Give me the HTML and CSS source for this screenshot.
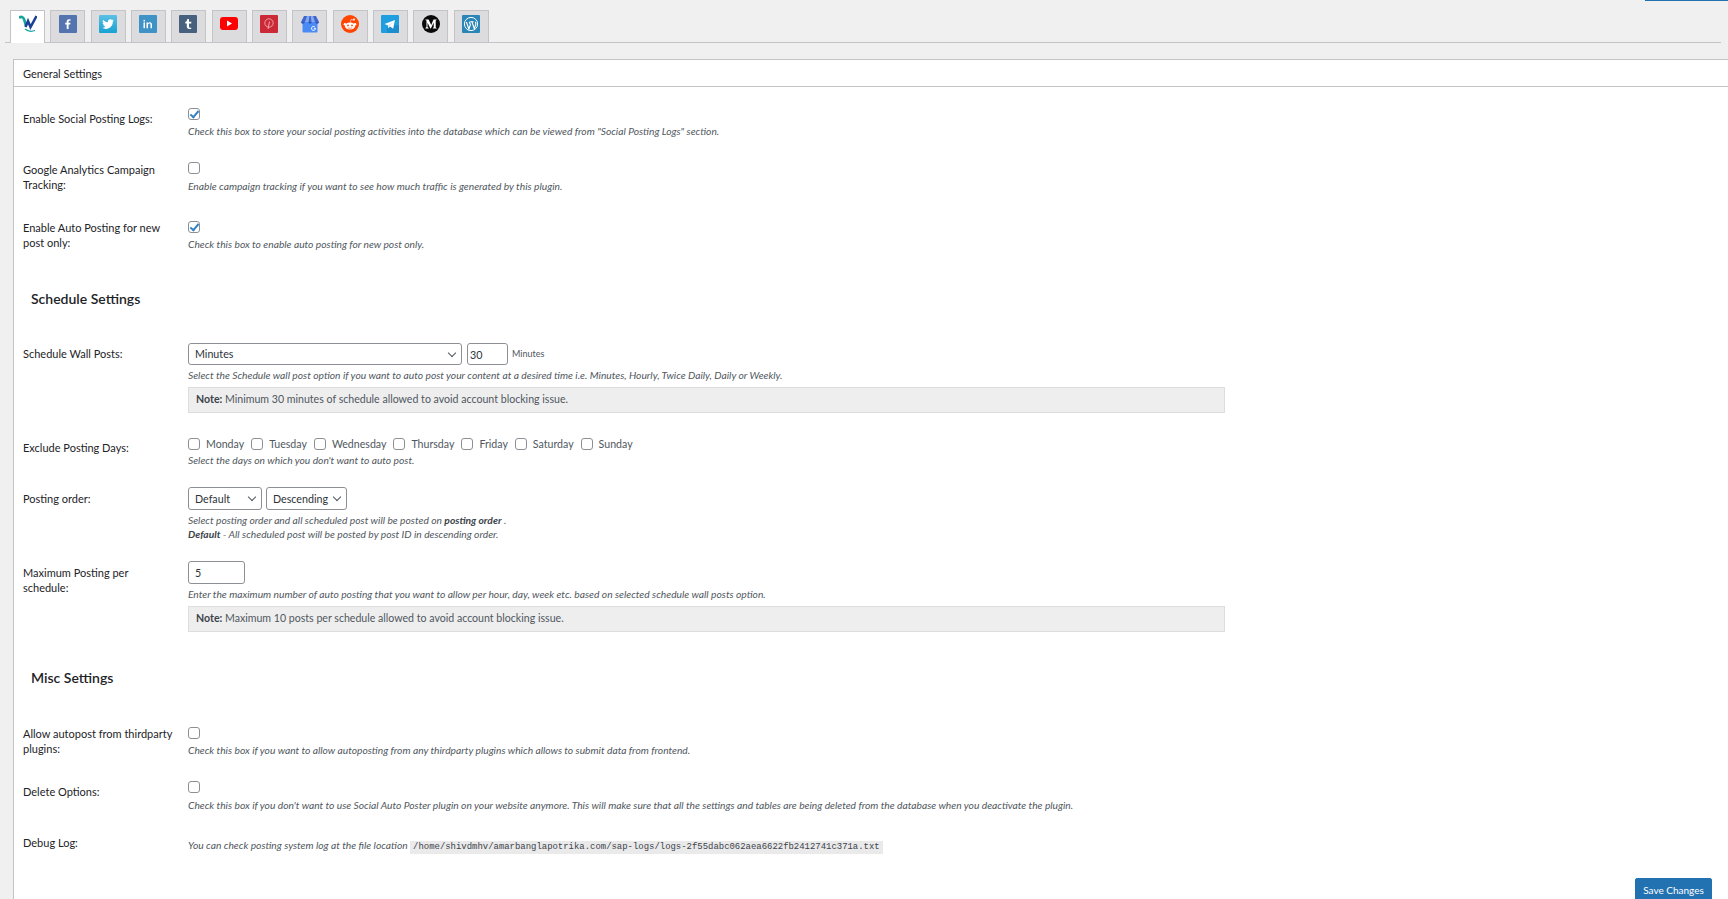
FILE: index.html
```html
<!DOCTYPE html>
<html lang="en">
<head>
    <meta charset="UTF-8">
    <meta name="viewport" content="width=device-width, initial-scale=1.0">
    <title>Social Auto Poster Settings</title>
    <link rel="stylesheet" href="styles.css">
</head>
<body>
    <div class="top-strip"><span class="top-strip-btn"></span></div>

    <nav class="tabs">
        <a class="tab tab-active"><svg width="18" height="18" viewBox="0 0 18 18"><path d="M0 3c2-2 4-1 5 1l2 7" fill="none" stroke="#12a5a0" stroke-width="2.600"/><path d="M6.500 12l2.500-6 2.500 6 6-11" fill="none" stroke="#1b3f96" stroke-width="2.500"/><path d="M6 14c3 2.500 6 3 10 1.500" fill="none" stroke="#12a5a0" stroke-width="1.300"/></svg></a>
        <a class="tab"><svg width="18" height="18" viewBox="0 0 18 18"><rect width="18" height="18" rx="1" fill="#5474b0"/><path d="M9.600 14V9.600h1.600l.3-1.800H9.600V6.700c0-.6.2-.9.9-.9h1V4.300c-.3 0-.8-.1-1.400-.1-1.500 0-2.400.9-2.400 2.300v1.300H6.200v1.800h1.500V14z" fill="#fff"/></svg></a>
        <a class="tab"><svg width="18" height="18" viewBox="0 0 18 18"><defs><linearGradient id="tw" x1="0" y1="0" x2="0" y2="1"><stop offset="0" stop-color="#5cc0e4"/><stop offset="1" stop-color="#17a2d2"/></linearGradient></defs><rect width="18" height="18" rx="1" fill="url(#tw)"/><path d="M15 5.400c-.4.200-.9.300-1.400.4.500-.3.900-.8 1.100-1.300-.5.300-1 .5-1.600.6a2.400 2.400 0 0 0-4.100 2.200C6.900 7.200 5.100 6.300 4 4.800c-.6 1.100-.3 2.500.7 3.200-.4 0-.8-.1-1.100-.3 0 1.200.8 2.200 1.900 2.400-.4.100-.7.100-1.100 0 .3 1 1.200 1.700 2.200 1.700-1 .8-2.300 1.200-3.600 1 4.900 2.800 10.900 0 10.900-6.500.5-.3.800-.7 1.100-.9z" fill="#fff"/></svg></a>
        <a class="tab"><svg width="18" height="18" viewBox="0 0 18 18"><rect width="18" height="18" rx="1" fill="#3f92c6"/><rect x="4.500" y="7.400" width="1.500" height="5.800" fill="#fff"/><rect x="4.500" y="4.900" width="1.500" height="1.500" fill="#fff"/><path d="M7.500 7.400H9v.8c.4-.6 1-.9 1.800-.9 1.400 0 2.200.9 2.200 2.500v3.400h-1.500v-3.200c0-.9-.3-1.400-1-1.400-.8 0-1.500.5-1.500 1.500v3.100H7.500z" fill="#fff"/></svg></a>
        <a class="tab"><svg class="icon-tumblr" width="18" height="18" viewBox="0 0 18 18"><rect width="18" height="18" rx="1" fill="#47617f"/><path d="M10 4v2.700h2.300v1.800H10v3c0 .9.500 1.200 1.200 1.200h1V14H10.300C8.800 14 7.800 13 7.800 11.600V8.500H6.300V7c1.300-.4 1.900-1.400 2-3z" fill="#fff"/></svg></a>
        <a class="tab"><svg class="icon-yt" width="18" height="13" viewBox="0 0 18 13"><rect width="18" height="13" rx="3" fill="#f00"/><path d="M7 3.500v6l5-3z" fill="#fff"/></svg></a>
        <a class="tab"><svg width="18" height="18" viewBox="0 0 18 18"><rect width="18" height="18" rx="1" fill="#cc2936"/><circle cx="9" cy="8" r="4.200" fill="none" stroke="#f3b9bd" stroke-width=".8"/><path d="M9.500 6.500L8 14" fill="none" stroke="#f3b9bd" stroke-width=".9"/></svg></a>
        <a class="tab"><svg width="18" height="18" viewBox="0 0 18 18"><path d="M1.500 7h15v9.500a1 1 0 0 1-1 1h-13a1 1 0 0 1-1-1z" fill="#4a8af4"/><path d="M3 1h12l3 6H0z" fill="#3f66cf"/><path d="M6 1h2.400L7.600 7H4zM9.700 1h2.400L14 7h-3.500z" fill="#86a8ec"/><path d="M0 7h3.600a1.800 1.800 0 0 1-3.600 0zM7.200 7h3.600a1.800 1.800 0 0 1-3.600 0zM14.400 7H18a1.800 1.800 0 0 1-3.600 0z" fill="#2f56bd"/><path d="M14.500 13.400a2 2 0 1 1-.6-1.400" fill="none" stroke="#fff" stroke-width="1"/><path d="M12.800 13.400h1.800" stroke="#fff" stroke-width=".9"/></svg></a>
        <a class="tab"><svg width="18" height="18" viewBox="0 0 18 18"><circle cx="9" cy="9" r="9" fill="#ff4500"/><ellipse cx="9" cy="11" rx="5.200" ry="3.500" fill="#fff"/><circle cx="3.900" cy="9.200" r="1.200" fill="#fff"/><circle cx="14.100" cy="9.200" r="1.200" fill="#fff"/><circle cx="13" cy="4.600" r="1" fill="#fff"/><path d="M9.200 7.500l.8-3 3 .6" fill="none" stroke="#fff" stroke-width=".6"/><circle cx="7" cy="10.400" r=".9" fill="#ff4500"/><circle cx="11" cy="10.400" r=".9" fill="#ff4500"/><path d="M6.800 12.700c1.300.8 3 .8 4.400 0" fill="none" stroke="#ff4500" stroke-width=".6"/></svg></a>
        <a class="tab"><svg width="18" height="18" viewBox="0 0 18 18"><rect width="18" height="18" rx="1" fill="#1f9fe0"/><path d="M8 11l4 4 3-11z M8 11l-2 2v5h12v-8z" fill="#1a84c0" opacity=".6"/><path d="M3.500 9L14 5l-1.800 8.800L9 11.500l-1.500 1.800L7 10.500z" fill="#fff"/><path d="M7 10.500l5-3.500-3.500 4.200-1 2.100z" fill="#cfe6f5"/></svg></a>
        <a class="tab"><svg width="18" height="18" viewBox="0 0 18 18"><circle cx="9" cy="9" r="9" fill="#0a0a0a"/><path d="M3.400 4.400h3.200L9.200 10l2.300-5.600h3.100v.5l-.9.7v6.800l.9.700v.5h-3.800v-.5l.9-.7V7.500l-2.800 6H8.400L5.500 7.800v4.300l1.100 1v.4H3.400v-.4l1.100-1V5.600l-1.100-.7z" fill="#fff"/></svg></a>
        <a class="tab"><svg width="18" height="18" viewBox="0 0 18 18"><rect width="18" height="18" rx="1" fill="#2a86b8"/><circle cx="9" cy="9" r="6.600" fill="none" stroke="#fff" stroke-width="1"/><path d="M4.400 7l2.500 7 1.500-4.300L7.300 6.800M8.200 6.700h3.400M10 7l2.300 6.800 1.500-4.600c.3-1-.2-1.800-.6-2.300" fill="none" stroke="#fff" stroke-width="1.100"/></svg></a>
    </nav>

    <section class="panel">
        <h2 class="panel-title">General Settings</h2>
        <div class="panel-body">
            <div class="row row-logs">
                <label class="row-label">Enable Social Posting Logs:</label>
                <div class="row-field">
                    <div class="line-check"><input type="checkbox" checked></div>
                    <p class="desc">Check this box to store your social posting activities into the database which can be viewed from "Social Posting Logs" section.</p>
                </div>
            </div>
            <div class="row row-ga">
                <label class="row-label">Google Analytics Campaign Tracking:</label>
                <div class="row-field">
                    <div class="line-check"><input type="checkbox"></div>
                    <p class="desc">Enable campaign tracking if you want to see how much traffic is generated by this plugin.</p>
                </div>
            </div>
            <div class="row row-auto">
                <label class="row-label">Enable Auto Posting for new post only:</label>
                <div class="row-field">
                    <div class="line-check"><input type="checkbox" checked></div>
                    <p class="desc">Check this box to enable auto posting for new post only.</p>
                </div>
            </div>

            <h3 class="group-title group-schedule">Schedule Settings</h3>

            <div class="row row-wall">
                <label class="row-label">Schedule Wall Posts:</label>
                <div class="row-field">
                    <div class="line-controls">
                        <div class="select select-wall">Minutes</div>
                        <input class="text-input input-mins" type="text" value="30">
                        <span class="unit">Minutes</span>
                    </div>
                    <p class="desc">Select the Schedule wall post option if you want to auto post your content at a desired time i.e. Minutes, Hourly, Twice Daily, Daily or Weekly.</p>
                    <div class="note"><b>Note:</b> Minimum 30 minutes of schedule allowed to avoid account blocking issue.</div>
                </div>
            </div>
            <div class="row row-days">
                <label class="row-label">Exclude Posting Days:</label>
                <div class="row-field">
                    <div class="days">
                        <label class="day"><input type="checkbox">Monday</label>
                        <label class="day"><input type="checkbox">Tuesday</label>
                        <label class="day"><input type="checkbox">Wednesday</label>
                        <label class="day"><input type="checkbox">Thursday</label>
                        <label class="day"><input type="checkbox">Friday</label>
                        <label class="day"><input type="checkbox">Saturday</label>
                        <label class="day"><input type="checkbox">Sunday</label>
                    </div>
                    <p class="desc">Select the days on which you don't want to auto post.</p>
                </div>
            </div>
            <div class="row row-order">
                <label class="row-label">Posting order:</label>
                <div class="row-field">
                    <div class="line-controls">
                        <div class="select select-default">Default</div>
                        <div class="select select-desc">Descending</div>
                    </div>
                    <p class="desc desc-order">Select posting order and all scheduled post will be posted on <b>posting order</b> .<br><b>Default</b> - All scheduled post will be posted by post ID in descending order.</p>
                </div>
            </div>
            <div class="row row-max">
                <label class="row-label">Maximum Posting per schedule:</label>
                <div class="row-field">
                    <input class="text-input input-max" type="text" value="5">
                    <p class="desc">Enter the maximum number of auto posting that you want to allow per hour, day, week etc. based on selected schedule wall posts option.</p>
                    <div class="note"><b>Note:</b> Maximum 10 posts per schedule allowed to avoid account blocking issue.</div>
                </div>
            </div>

            <h3 class="group-title group-misc">Misc Settings</h3>

            <div class="row row-third">
                <label class="row-label">Allow autopost from thirdparty plugins:</label>
                <div class="row-field">
                    <div class="line-check"><input type="checkbox"></div>
                    <p class="desc">Check this box if you want to allow autoposting from any thirdparty plugins which allows to submit data from frontend.</p>
                </div>
            </div>
            <div class="row row-delete">
                <label class="row-label">Delete Options:</label>
                <div class="row-field">
                    <div class="line-check"><input type="checkbox"></div>
                    <p class="desc">Check this box if you don't want to use Social Auto Poster plugin on your website anymore. This will make sure that all the settings and tables are being deleted from the database when you deactivate the plugin.</p>
                </div>
            </div>
            <div class="row row-debug">
                <label class="row-label">Debug Log:</label>
                <div class="row-field">
                    <p class="desc">You can check posting system log at the file location <code class="path">/home/shivdmhv/amarbanglapotrika.com/sap-logs/logs-2f55dabc062aea6622fb2412741c371a.txt</code></p>
                </div>
            </div>

            <div class="actions">
                <button class="save-btn" type="button">Save Changes</button>
            </div>
        </div>
    </section>
</body>
</html>
```

FILE: styles.css
```css
html, body {
    height: 899px;
    overflow: hidden;
}
body {
    margin: 0;
    background: #f0f0f1;
    color: #1d2327;
    font-family: Lato, "Open Sans", sans-serif;
    font-size: 11px;
    line-height: 14.5px;
}
.top-strip {
    display: flex;
    justify-content: flex-end;
    height: 1px;
}
.top-strip-btn {
    width: 83px;
    background: #2271b1;
}

/* tabs */
.tabs {
    display: flex;
    gap: 5.33px;
    height: 32px;
    margin: 9px 7px 0 5px;
    padding-left: 5px;
    border-bottom: 1px solid #c3c4c7;
}
.tab {
    box-sizing: border-box;
    display: flex;
    justify-content: center;
    padding-top: 4px;
    width: 35px;
    height: 32px;
    background: #dcdcde;
    border: 1px solid #c3c4c7;
    border-bottom: none;
}
.icon-yt {
    margin-top: 2px;
}
.icon-tumblr {
    margin-left: -2px;
}
.tab-active {
    height: 33px;
    background: #fff;
}

/* panel */
.panel {
    box-sizing: border-box;
    height: 840px;
    margin: 16px -4px 0 13px;
    background: #fff;
    border: 1px solid #c3c4c7;
    border-bottom: none;
}
.panel-title {
    margin: 0;
    padding: 6px 9px 4px;
    font-size: 11px;
    font-weight: 400;
    line-height: 16px;
    border-bottom: 1px solid #c3c4c7;
}
.panel-body {
    padding: 21px 19px 0 9px;
}
.row {
    display: grid;
    grid-template-columns: 165px 1fr;
}
.row-label {
    display: block;
    padding-top: 1px;
    padding-right: 14px;
}
.row-field {
    min-width: 0;
}

/* row spacing */
.row-ga { margin-top: 24px; }
.row-auto { margin-top: 28px; }
.row-wall { margin-top: 35px; }
.row-days { margin-top: 25px; }
.row-order { margin-top: 20px; }
.row-max { margin-top: 20px; }
.row-third { margin-top: 40px; }
.row-delete { margin-top: 24px; }
.row-debug { margin-top: 23px; }

.row-logs .row-label,
.row-wall .row-label,
.row-delete .row-label { padding-top: 4px; }
.row-days .row-label { padding-top: 3px; }
.row-order .row-label,
.row-max .row-label { padding-top: 5px; }
.row-auto .row-label,
.row-third .row-label { padding-top: 0; }

.line-check {
    display: flex;
    height: 12px;
}
.desc {
    margin: 4px 0 0;
    font-size: 10.25px;
    font-style: italic;
    line-height: 14px;
    color: #50575e;
    white-space: nowrap;
}
.row-ga .desc,
.row-delete .desc { margin-top: 5px; }
.row-wall .desc,
.row-days .desc,
.row-order .desc,
.row-max .desc,
.row-debug .desc { margin-top: 3px; }
.desc-order b { color: #3c434a; }

input[type="checkbox"] {
    appearance: none;
    box-sizing: border-box;
    flex: none;
    display: block;
    width: 12px;
    height: 12px;
    margin: 0;
    background: #fff;
    border: 1px solid #8c8f94;
    border-radius: 3px;
    position: relative;
}
input[type="checkbox"]:checked::before {
    content: "";
    position: absolute;
    left: 3px;
    top: 0;
    width: 3px;
    height: 7px;
    border: solid #3582c4;
    border-width: 0 2px 2px 0;
    transform: rotate(40deg);
}

.line-controls {
    display: flex;
    align-items: center;
    gap: 4px;
}
.select {
    box-sizing: border-box;
    position: relative;
    height: 22px;
    padding: 0 6px;
    font-size: 10.7px;
    line-height: 20px;
    color: #2c3338;
    background: #fff;
    border: 1px solid #8c8f94;
    border-radius: 3px;
}
.select::after {
    content: "";
    position: absolute;
    right: 6px;
    top: 6px;
    width: 5px;
    height: 5px;
    border: solid #50575e;
    border-width: 0 1px 1px 0;
    transform: rotate(45deg);
}
.select-wall { width: 274px; }
.select-default { width: 74px; height: 23px; line-height: 21px; }
.select-desc { width: 81px; height: 23px; line-height: 21px; }
.text-input {
    box-sizing: border-box;
    display: block;
    height: 22px;
    margin: 0;
    font: inherit;
    font-size: 10.7px;
    color: #2c3338;
    background: #fff;
    border: 1px solid #8c8f94;
    border-radius: 3px;
}
.input-mins { width: 41px; margin-left: 1px; padding: 0 2px; }
.input-max { width: 57px; height: 23px; padding: 0 6px; }
.unit {
    font-size: 9px;
    color: #50575e;
}
.note {
    box-sizing: border-box;
    width: 1037px;
    height: 26px;
    margin-top: 5px;
    padding: 0 7px;
    font-size: 10.6px;
    line-height: 22px;
    color: #50575e;
    background: #eee;
    border: 1px solid #ddd;
}
.note b {
    font-weight: 700;
    color: #3c434a;
}
.days {
    display: flex;
    gap: 7px;
}
.day {
    display: flex;
    align-items: center;
    gap: 6px;
    height: 12px;
    font-size: 10.6px;
    color: #50575e;
}
.path {
    display: inline-block;
    padding: 0 3px;
    background: #eaeaeb;
    font-family: "Liberation Mono", monospace;
    font-style: normal;
    font-size: 8.95px;
    line-height: 13px;
    color: #3c434a;
}

.group-title {
    margin: 0;
    padding-left: 8px;
    font-size: 14px;
    font-weight: 600;
    line-height: 18px;
}
.group-schedule { margin-top: 39px; }
.group-misc { margin-top: 37px; }

.actions {
    display: flex;
    justify-content: flex-end;
    margin-top: 24px;
}
.save-btn {
    width: 77px;
    height: 22px;
    padding: 2px 0 0;
    font: inherit;
    font-size: 10px;
    line-height: 18px;
    color: #fff;
    background: #2271b1;
    border: 1px solid #2271b1;
    border-radius: 2px 2px 0 0;
}
```
